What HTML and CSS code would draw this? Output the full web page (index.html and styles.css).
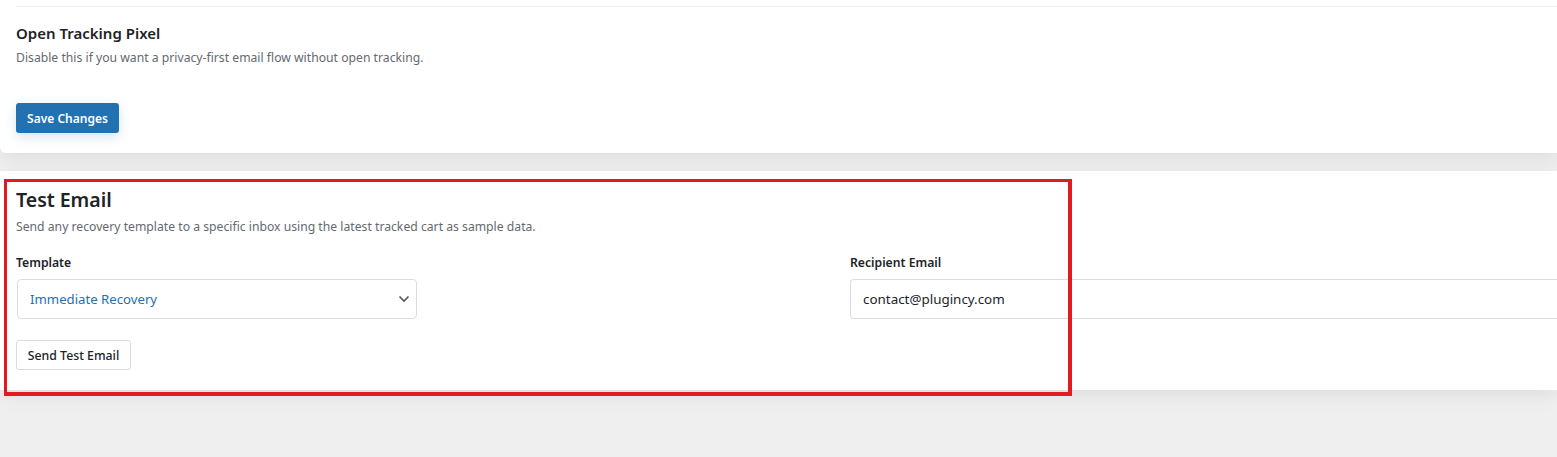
FILE: index.html
```html
<!DOCTYPE html>
<html lang="en">
<head>
<meta charset="utf-8">
<title>Settings</title>
<link rel="stylesheet" href="styles.css">
</head>
<body>
<div class="page">
  <section class="card card-settings">
    <div class="divider"></div>
    <div class="setting">
      <h3 class="setting-title">Open Tracking Pixel</h3>
      <p class="setting-desc">Disable this if you want a privacy-first email flow without open tracking.</p>
    </div>
    <button class="btn-primary" type="button">Save Changes</button>
  </section>

  <section class="card card-test">
    <h2 class="card-title">Test Email</h2>
    <p class="card-desc">Send any recovery template to a specific inbox using the latest tracked cart as sample data.</p>
    <div class="fields">
      <div class="field">
        <label class="field-label">Template</label>
        <div class="select">
          <span class="select-value">Immediate Recovery</span>
          <svg class="chev" width="12" height="8" viewBox="0 0 12 8"><path d="M1.5 1.5 L6 6 L10.5 1.5" fill="none" stroke="#50575e" stroke-width="1.6"/></svg>
        </div>
      </div>
      <div class="field">
        <label class="field-label">Recipient Email</label>
        <div class="input">contact@plugincy.com</div>
      </div>
    </div>
    <button class="btn-secondary" type="button">Send Test Email</button>
    <div class="highlight"></div>
  </section>
</div>
</body>
</html>
```
FILE: styles.css
```css
html, body {
  margin: 0;
  padding: 0;
  overflow: hidden;
}
body {
  background: #efefef;
  font-family: "Noto Sans", "Open Sans", sans-serif;
  color: #1d2327;
  width: 1557px;
  height: 457px;
}
.page {
  width: 1557px;
}
.card {
  background: #fff;
  position: relative;
  box-shadow: 0 6px 18px rgba(0, 0, 0, 0.07);
}
.card-settings {
  padding: 6px 0 20px 16px;
  height: 127px;
  border-radius: 0 0 0 6px;
}
.divider {
  height: 1px;
  background: #edf1f6;
}
.setting {
  padding-top: 16px;
}
.setting-title {
  margin: 0;
  font-size: 15px;
  font-weight: 600;
  line-height: 20px;
  color: #1d2327;
}
.setting-desc {
  margin: 6px 0 0;
  font-size: 12.2px;
  line-height: 18px;
  color: #646970;
}
.btn-primary {
  margin-top: 36px;
  height: 30px;
  width: 103px;
  padding: 0;
  border: none;
  border-radius: 3px;
  background: #2271b1;
  color: #fff;
  font-family: inherit;
  font-size: 12px;
  font-weight: 600;
  box-shadow: 0 4px 12px rgba(34, 113, 177, 0.18);
}
.card-test {
  margin-top: 18px;
  padding: 16px 0 20px 16px;
  height: 183px;
}
.card-title {
  margin: 0;
  font-size: 19.5px;
  font-weight: 600;
  line-height: 26px;
  color: #1d2327;
}
.card-desc {
  margin: 5px 0 0;
  font-size: 12.2px;
  line-height: 18px;
  color: #646970;
}
.fields {
  display: grid;
  grid-template-columns: 810px 1fr;
  column-gap: 24px;
  margin-top: 18px;
}
.field {
  display: flex;
  flex-direction: column;
  align-items: flex-start;
}
.field-label {
  font-size: 12.2px;
  font-weight: 600;
  line-height: 18px;
  color: #1d2327;
}
.select {
  margin-top: 7px;
  margin-left: 1px;
  box-sizing: border-box;
  width: 400px;
  height: 40px;
  border: 1px solid #dcdcde;
  border-radius: 4px;
  display: flex;
  align-items: center;
  justify-content: space-between;
  padding: 0 6px 0 12px;
}
.select-value {
  font-size: 13.2px;
  color: #2271b1;
}
.input {
  margin-top: 7px;
  box-sizing: border-box;
  width: 100%;
  height: 40px;
  border: 1px solid #dcdcde;
  border-right: none;
  border-radius: 4px 0 0 4px;
  display: flex;
  align-items: center;
  padding: 0 12px;
  font-size: 13.4px;
  color: #1d2327;
}
.btn-secondary {
  margin-top: 21px;
  height: 30px;
  width: 115px;
  padding: 0;
  background: #fff;
  border: 1px solid #dcdcde;
  border-radius: 3px;
  font-family: inherit;
  font-size: 12.3px;
  font-weight: 500;
  color: #1d2327;
}
.highlight {
  position: absolute;
  left: 4px;
  top: 8px;
  width: 1068px;
  height: 217px;
  box-sizing: border-box;
  border-style: solid;
  border-color: #e31b1f;
  border-width: 3px 4px 4px 3px;
  pointer-events: none;
}
```
